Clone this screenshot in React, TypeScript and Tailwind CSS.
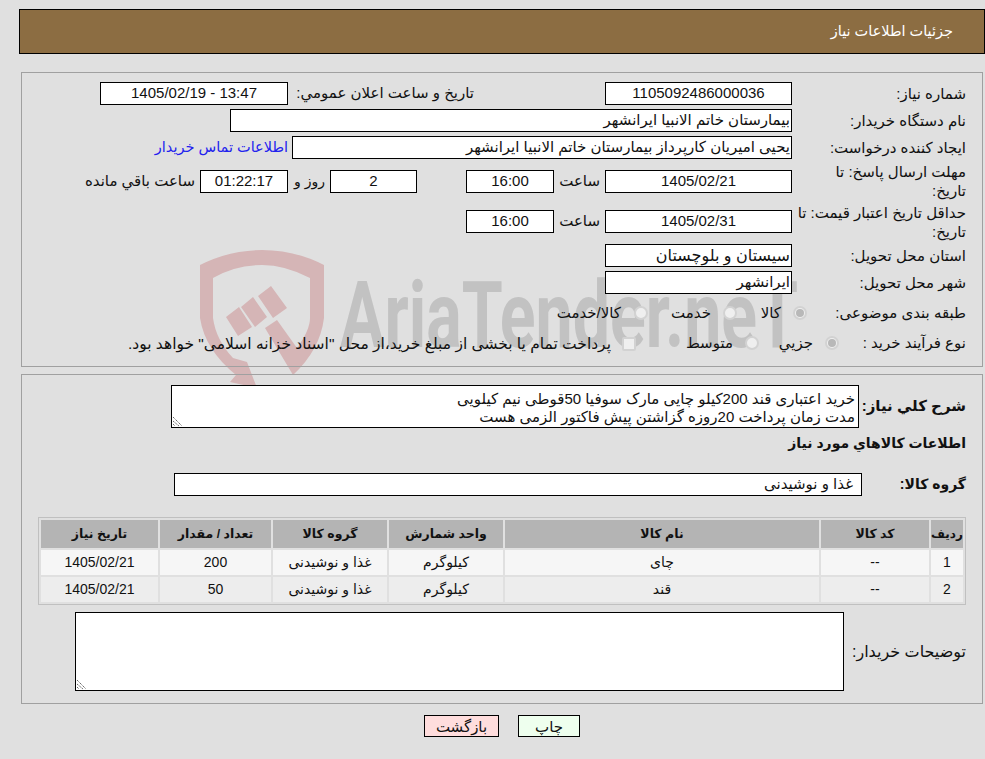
import type { ReactNode } from "react";

const FONT = "[font-family:'Liberation_Sans','DejaVu_Sans',sans-serif]";

// ---------------------------------------------------------------------------
// Small form pieces
// ---------------------------------------------------------------------------

function Field({ className = "", children }: { className?: string; children?: ReactNode }) {
  return (
    <div className={`flex h-[23px] shrink-0 items-center whitespace-nowrap border border-black bg-white ${className}`}>
      {children}
    </div>
  );
}

function Label({ children }: { children: ReactNode }) {
  return <div className="w-[190px] shrink-0 pr-[16px] text-[15px] leading-[19px]">{children}</div>;
}

function Radio({ checked = false }: { checked?: boolean }) {
  return (
    <span className="flex size-[14px] shrink-0 -translate-y-px items-center justify-center rounded-full border-2 border-[#d2d2d2] bg-[#efefef]">
      {checked && <span className="size-[8px] rounded-full bg-[#b8b8b8]" />}
    </span>
  );
}

function Grip() {
  return (
    <svg className="absolute bottom-0 left-0" width="12" height="12" viewBox="0 0 12 12" fill="none" stroke="#666" strokeWidth="1">
      <path d="M1 2 L10 11 M1 6 L7 11 M1 9 L3 11" strokeDasharray="1.4 .7" />
    </svg>
  );
}

const ROWS = [
  { row: "1", code: "--", name: "چای", unit: "کیلوگرم", group: "غذا و نوشیدنی", qty: "200", date: "1405/02/21", bg: "bg-[#f6f6f6]" },
  { row: "2", code: "--", name: "قند", unit: "کیلوگرم", group: "غذا و نوشیدنی", qty: "50", date: "1405/02/21", bg: "bg-[#ededed]" },
];

// ---------------------------------------------------------------------------
// Watermark behind the panels
// ---------------------------------------------------------------------------

function Watermark() {
  return (
    <div dir="ltr" className="pointer-events-none absolute left-[190px] top-[240px] h-[200px] w-[640px]">
      <svg className="absolute left-0 top-0" width="150" height="200" viewBox="190 240 150 200" fill="#d5b5b6">
        <path d="M200 265 Q230 250 262 250 Q295 250 324 265 L324 318 Q320 350 293 375 L265 328 L277 320 L297 348 Q310 330 310 318 L310 278 Q285 265 262 265 Q235 265 213 278 L213 318 Q216 340 233 358 L247 362 L257 388 L230 382 L236 375 Q205 350 200 318 Z" />
        <path d="M226 317 L239 307 L252 327 L238 336 Z M241 307 L253 297 L267 317 L255 327 Z M258 296 L271 286 L287 308 L273 318 Z" />
      </svg>
      <div className="absolute left-[150px] top-[26px] origin-left scale-x-[0.72] whitespace-nowrap text-[92px] font-bold leading-[100px] text-[#c2c2c2] [font-family:'Roboto',sans-serif]">
        AriaTender.neT
      </div>
    </div>
  );
}

// ---------------------------------------------------------------------------
// Page
// ---------------------------------------------------------------------------

export default function App() {
  return (
    <div dir="rtl" className={`relative h-[759px] w-[985px] overflow-hidden bg-[#e0e0e0] pt-[9px] text-[15px] text-[#111] ${FONT}`}>
      <Watermark />

      <div className="relative flex flex-col">
        {/* Title bar */}
        <div className="ml-[19px] flex h-[45px] items-center border border-black bg-[#8c6d42] pr-[31px] text-[14.5px] text-white">
          جزئیات اطلاعات نیاز
        </div>

        {/* Main details */}
        <div className="ml-[21px] mr-[2px] mt-[18px] flex h-[295px] flex-col gap-[4px] border border-[#a0a0a0] pt-[9px]">
          <div className="flex items-center">
            <Label>شماره نیاز:</Label>
            <Field className="w-[187px] justify-center">1105092486000036</Field>
            <div className="mr-[131px] w-[181px] whitespace-nowrap">تاریخ و ساعت اعلان عمومي:</div>
            <Field className="mr-[5px] w-[188px] justify-center">13:47 - 1405/02/19</Field>
          </div>
          <div className="flex items-center">
            <Label>نام دستگاه خریدار:</Label>
            <Field className="w-[562px] px-px">بیمارستان خاتم الانبیا ایرانشهر</Field>
          </div>
          <div className="flex items-center">
            <Label>ایجاد کننده درخواست:</Label>
            <Field className="w-[500px] px-px">یحیی امیریان کارپرداز بیمارستان خاتم الانبیا ایرانشهر</Field>
            <a className="mr-[4px] whitespace-nowrap text-[14.5px] text-[#2222ee]">اطلاعات تماس خریدار</a>
          </div>
          <div className="flex h-[36px] items-center">
            <Label>
              مهلت ارسال پاسخ: تا
              <br />
              تاریخ:
            </Label>
            <Field className="w-[187px] justify-center">1405/02/21</Field>
            <div className="w-[51px] pr-[5px]">ساعت</div>
            <Field className="w-[88px] justify-center">16:00</Field>
            <Field className="mr-[49px] w-[87px] justify-center">2</Field>
            <div className="w-[42px] whitespace-nowrap pr-[5px] text-[14px]">روز و</div>
            <Field className="w-[88px] justify-center bg-[#ffffee]">01:22:17</Field>
            <div className="whitespace-nowrap pr-[5px]">ساعت باقي مانده</div>
          </div>
          <div className="flex h-[37px] items-center">
            <Label>
              حداقل تاریخ اعتبار قیمت: تا
              <br />
              تاریخ:
            </Label>
            <Field className="w-[187px] justify-center">1405/02/31</Field>
            <div className="w-[51px] pr-[5px]">ساعت</div>
            <Field className="w-[88px] justify-center">16:00</Field>
          </div>
          <div className="flex items-center">
            <Label>استان محل تحویل:</Label>
            <Field className="w-[187px] px-px text-[16px]">سیستان و بلوچستان</Field>
          </div>
          <div className="flex items-center">
            <Label>شهر محل تحویل:</Label>
            <Field className="w-[187px] px-px">ایرانشهر</Field>
          </div>
          <div className="mt-[4px] flex h-[23px] items-center whitespace-nowrap">
            <div className="w-[175px] shrink-0 pr-[16px]">طبقه بندی موضوعی:</div>
            <Radio checked />
            <span className="mr-[12px] w-[44px]">کالا</span>
            <Radio />
            <span className="mr-[12px] w-[63px]">خدمت</span>
            <Radio />
            <span className="mr-[13px]">کالا/خدمت</span>
          </div>
          <div className="mt-[3px] flex h-[23px] items-center whitespace-nowrap">
            <div className="w-[143px] shrink-0 pr-[16px]">نوع فرآیند خرید :</div>
            <Radio checked />
            <span className="mr-[12px] w-[54px]">جزيي</span>
            <Radio />
            <span className="mr-[12px] w-[97px]">متوسط</span>
            <span className="size-[14px] shrink-0 rounded-[2px] border-2 border-[#d2d2d2] bg-[#efefef]" />
            <span className="mr-[11px] text-[15.5px]">پرداخت تمام یا بخشی از مبلغ خرید،از محل "اسناد خزانه اسلامی" خواهد بود.</span>
          </div>
        </div>

        {/* Description and items */}
        <div className="ml-[21px] mr-[2px] mt-[7px] flex h-[330px] flex-col border border-[#a0a0a0]">
          <div className="mt-[10px] flex items-center">
            <div className="w-[123px] shrink-0 whitespace-nowrap pr-[16px] font-bold">شرح کلي نياز:</div>
            <div className="relative h-[43px] w-[688px] shrink-0 border border-black bg-white px-[3px] py-[4px] leading-[18px]">
              <div>خرید اعتباری قند 200کیلو چایی مارک سوفیا 50قوطی نیم کیلویی</div>
              <div>مدت زمان پرداخت 20روزه گزاشتن پیش فاکتور الزمی هست</div>
              <Grip />
            </div>
          </div>
          <div className="mt-[5px] whitespace-nowrap pr-[16px] text-[14px] font-bold leading-[20px]">اطلاعات کالاهاي مورد نياز</div>
          <div className="mt-[20px] flex items-center">
            <div className="w-[120px] shrink-0 whitespace-nowrap pr-[16px] text-[14px] font-bold">گروه کالا:</div>
            <Field className="w-[688px] pr-[8px]">غذا و نوشیدنی</Field>
          </div>

          <table className="mr-[16px] mt-[21px] w-[928px] table-fixed border-separate border-spacing-[2px] self-start border border-[#c0c0c0] text-center text-[14px]">
            <colgroup>
              <col className="w-[32px]" />
              <col className="w-[108px]" />
              <col className="w-[314px]" />
              <col className="w-[114px]" />
              <col className="w-[114px]" />
              <col className="w-[111px]" />
              <col className="w-[117px]" />
            </colgroup>
            <thead>
              <tr className="h-[28px] bg-[#b4b4b4] text-[12.5px] font-bold">
                <th className="p-0 text-[12px]">رديف</th>
                <th>کد کالا</th>
                <th>نام کالا</th>
                <th>واحد شمارش</th>
                <th>گروه کالا</th>
                <th>تعداد / مقدار</th>
                <th>تاریخ نیاز</th>
              </tr>
            </thead>
            <tbody>
              {ROWS.map((r) => (
                <tr key={r.row} className={`h-[25px] ${r.bg}`}>
                  <td>{r.row}</td>
                  <td>{r.code}</td>
                  <td>{r.name}</td>
                  <td>{r.unit}</td>
                  <td>{r.group}</td>
                  <td>{r.qty}</td>
                  <td>{r.date}</td>
                </tr>
              ))}
            </tbody>
          </table>

          <div className="mt-[7px] flex items-center">
            <div className="w-[138px] shrink-0 whitespace-nowrap pr-[16px] text-[16px]">توضیحات خریدار:</div>
            <div className="relative h-[79px] w-[769px] shrink-0 border border-black bg-white">
              <Grip />
            </div>
          </div>
        </div>

        {/* Actions */}
        <div className="mt-[11px] flex justify-center gap-[19px] pl-[19px]">
          <button className="h-[22px] w-[62px] border border-black bg-[#eeffee] text-[#111]">چاپ</button>
          <button className="h-[22px] w-[75px] border border-black bg-[#ffdddd] text-[#111]">بازگشت</button>
        </div>
      </div>
    </div>
  );
}
